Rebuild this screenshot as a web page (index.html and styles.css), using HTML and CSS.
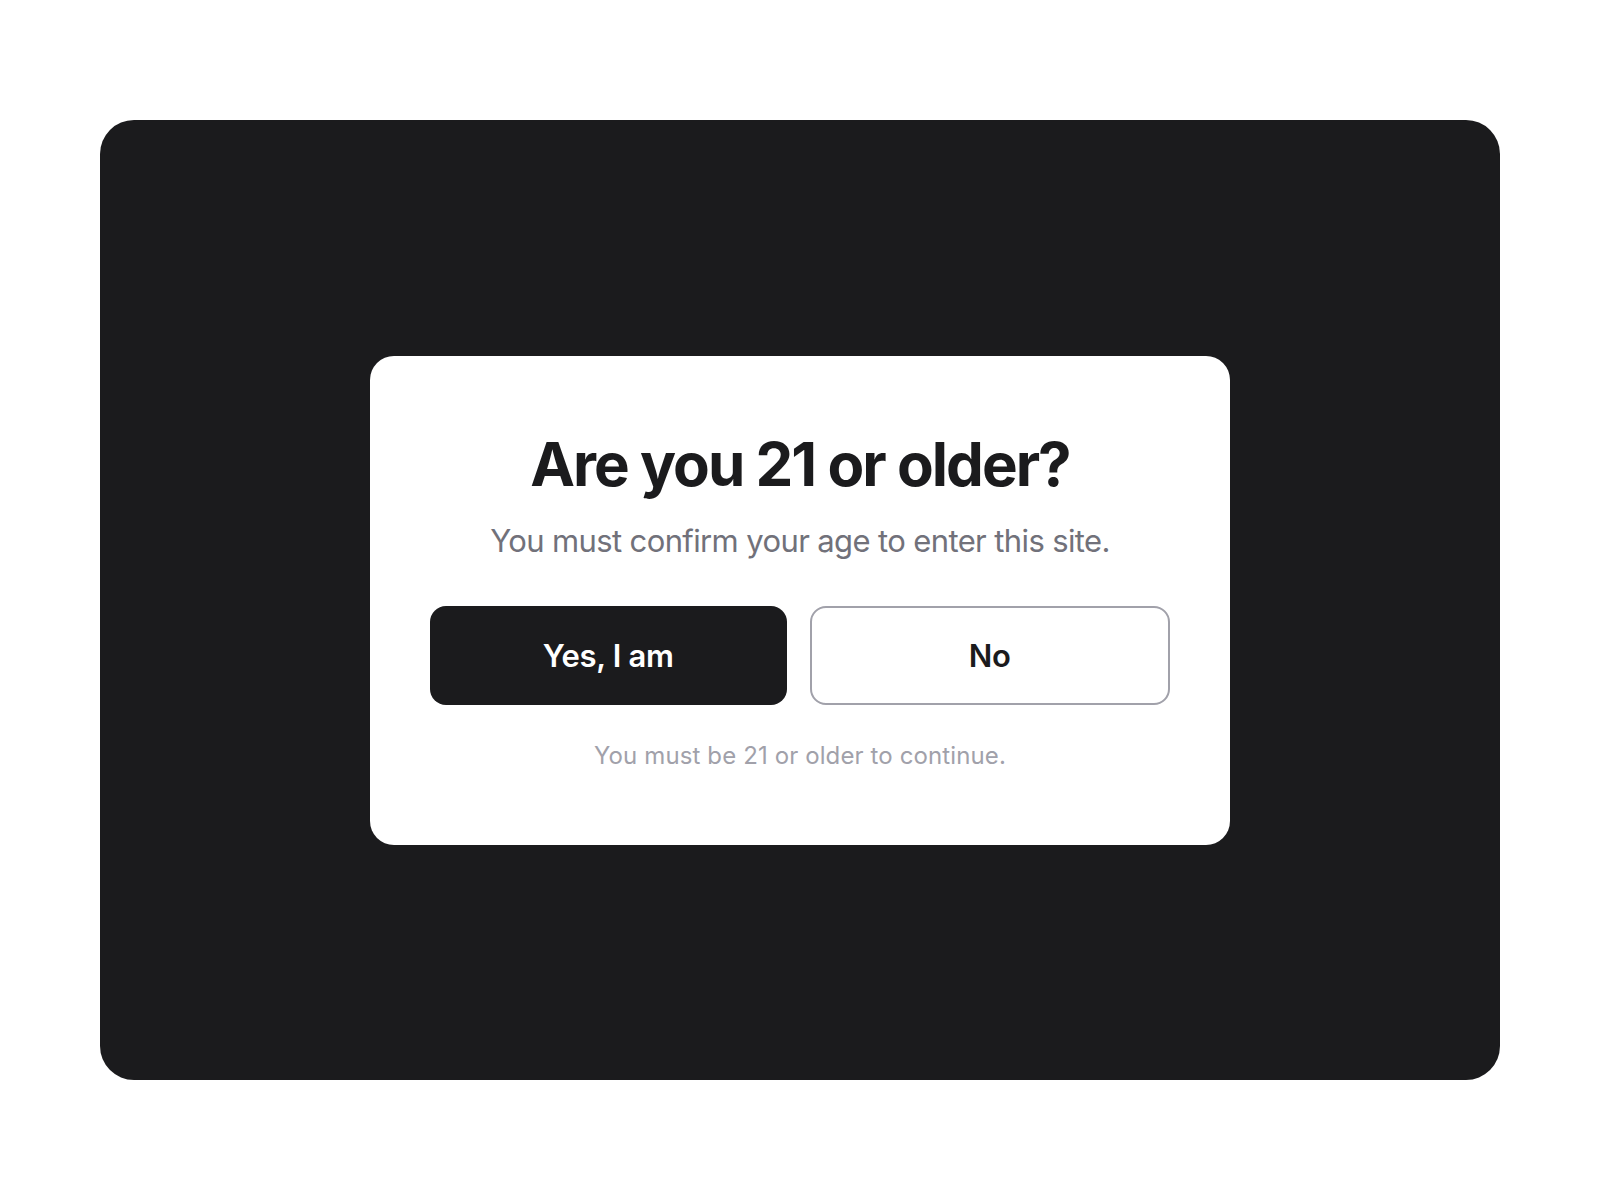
FILE: index.html
```html
<!DOCTYPE html>
<html lang="en">
<head>
<meta charset="utf-8">
<title>Age verification</title>
<link rel="stylesheet" href="styles.css">
</head>
<body>
<div class="page">
  <div class="backdrop">
    <div class="modal">
      <h1 class="title">Are you 21 or older?</h1>
      <p class="subtitle">You must confirm your age to enter this site.</p>
      <div class="actions">
        <button class="btn btn-yes">Yes, I am</button>
        <button class="btn btn-no">No</button>
      </div>
      <p class="note">You must be 21 or older to continue.</p>
    </div>
  </div>
</div>
</body>
</html>
```
FILE: styles.css
```css
html, body {
  margin: 0;
  padding: 0;
  background: #ffffff;
}
body {
  font-family: Inter, "Noto Sans", "Liberation Sans", sans-serif;
}
.page {
  padding: 120px 100px;
}
.backdrop {
  height: 960px;
  background: #1b1b1d;
  border-radius: 34px;
  display: flex;
  align-items: center;
  justify-content: center;
}
.modal {
  width: 860px;
  box-sizing: border-box;
  background: #ffffff;
  border-radius: 24px;
  padding: 72px 60px 73px;
  display: flex;
  flex-direction: column;
  align-items: center;
}
.title {
  margin: 0;
  font-size: 60px;
  line-height: 72px;
  font-weight: 700;
  letter-spacing: -0.033em;
  color: #1b1b1d;
}
.subtitle {
  margin: 21px 0 0;
  font-size: 31px;
  line-height: 40px;
  letter-spacing: -0.02em;
  color: #71717a;
}
.actions {
  margin-top: 45px;
  width: 100%;
  display: flex;
  gap: 23px;
}
.btn {
  flex: 1;
  height: 99px;
  box-sizing: border-box;
  border-radius: 16px;
  font-family: inherit;
  font-size: 31px;
  font-weight: 600;
  letter-spacing: -0.01em;
}
.btn-yes {
  background: #1b1b1d;
  color: #ffffff;
  border: none;
}
.btn-no {
  background: #ffffff;
  color: #1b1b1d;
  border: 2px solid #a1a1aa;
}
.note {
  margin: 35px 0 0;
  font-size: 24px;
  line-height: 32px;
  letter-spacing: 0.005em;
  color: #a1a1aa;
}
```
